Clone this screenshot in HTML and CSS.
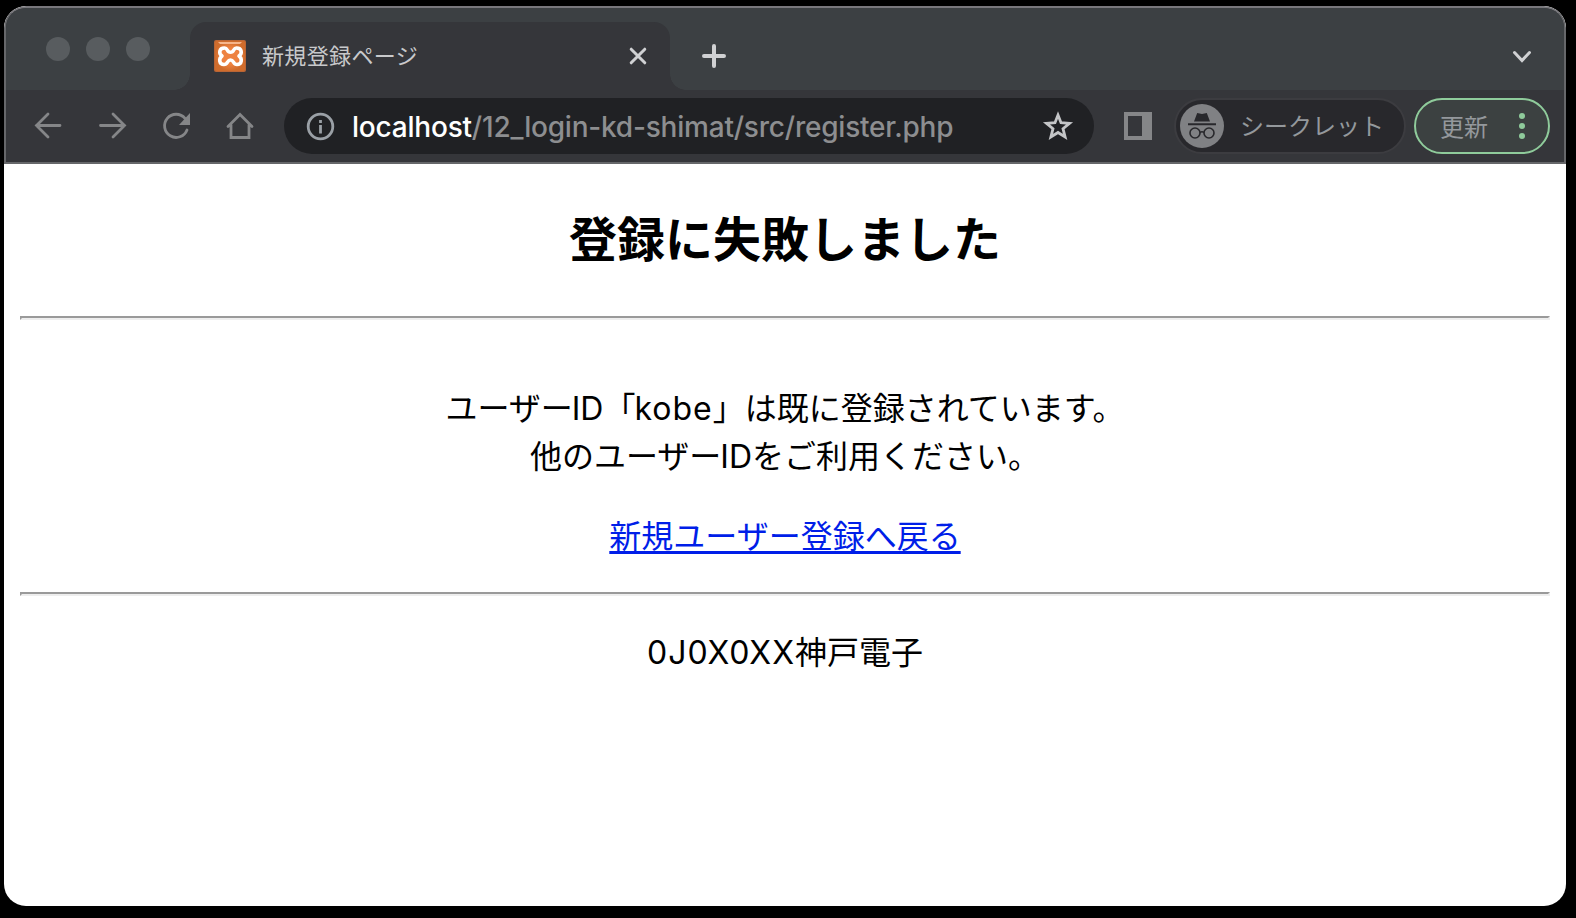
FILE: index.html
```html
<!DOCTYPE html>
<html lang="ja">
<head>
<meta charset="utf-8">
<title>新規登録ページ</title>
<link rel="stylesheet" href="styles.css">
</head>
<body>
<div class="window">
  <header class="chrome">
    <div class="tabstrip">
      <div class="lights"><i></i><i></i><i></i></div>
      <div class="tab">
        <svg class="favicon" viewBox="0 0 32 32">
          <defs><radialGradient id="fav"><stop offset=".55" stop-color="#ee8241"/><stop offset="1" stop-color="#cf6c2c"/></radialGradient></defs>
          <rect width="32" height="32" rx="2" fill="#b96535"/>
          <rect x="1" y="1" width="30" height="30" rx="2" fill="url(#fav)"/>
          <path d="M4 2h24l-2 2H6z" fill="#f6b58b"/>
          <path d="M10.500 8C5 8 4.500 13.500 8 16 4.500 18.500 5 24.500 10 24.500c4 0 3-4.500 6.500-4.500s2.500 4.500 6.500 4.500c5 0 5.500-6 2-8.500 3.500-2.500 3-8-2.500-8-3.500 0-2 4.300-6 4.300S14 8 10.500 8z" fill="none" stroke="#fff" stroke-width="3.600" stroke-linejoin="round"/>
        </svg>
        <span class="tab-title">新規登録ページ</span>
        <svg class="close" viewBox="0 0 16 16"><path d="M1.200 1.200 14.800 14.800M14.800 1.200 1.200 14.800"/></svg>
      </div>
      <svg class="plus" viewBox="0 0 24 24"><path d="M12 2v20M2 12h20"/></svg>
      <svg class="chevron" viewBox="0 0 18 12"><path d="m1.500 1.500 7.500 8 7.500-8"/></svg>
    </div>
    <div class="toolbar">
      <nav class="nav">
        <svg viewBox="0 0 28 28"><path d="M14 2 2.500 13.500 14 25M2.500 13.500H26"/></svg>
        <svg viewBox="0 0 28 28"><path d="M15 2l11.500 11.500L15 25M26.500 13.500H2.500"/></svg>
        <svg viewBox="0 0 28 28"><path d="M23 6.300A11.600 11.600 0 1 0 25 18"/><path class="solid" d="M28 1v12H17z"/></svg>
        <svg viewBox="0 0 28 28"><path d="M2 14.500 14 2.500l12 12M5 13v12.500h18V13"/></svg>
      </nav>
      <div class="omnibox">
        <svg class="info" viewBox="0 0 28 28"><circle cx="14.500" cy="14.500" r="12.300"/><path d="M14.500 13v8.500M14.500 8v3"/></svg>
        <span class="url"><span class="host">localhost</span><span class="path">/12_login-kd-shimat/src/register.php</span></span>
        <svg class="star" viewBox="0 0 30 30"><path d="m15 4 3 7.700 8.500.6-6.500 5.400 2.100 8.300-7.100-4.500L7.900 26 10 17.700l-6.500-5.400 8.500-.6z"/></svg>
      </div>
      <svg class="panel" viewBox="0 0 28 28"><path fill-rule="evenodd" d="M0 0h28v28H0zM4 4v20h14V4z"/></svg>
      <div class="incognito">
        <svg viewBox="0 0 44 44"><circle cx="22" cy="22" r="22" fill="#808184"/><path d="m14 17.500 3.200-8.500 4.800 1 4.800-1 3.200 8.500z" fill="#28282c"/><path d="M8 20.300h28" stroke="#28282c" stroke-width="2"/><g fill="none" stroke="#28282c" stroke-width="1.600"><circle cx="15" cy="29" r="5"/><circle cx="29" cy="29" r="5"/><path d="M20 28.500q2-1.500 4 0"/></g></svg>
        <span>シークレット</span>
      </div>
      <div class="update"><span>更新</span><div class="dots"><i></i><i></i><i></i></div></div>
    </div>
  </header>
  <main class="page">
    <h1>登録に失敗しました</h1>
    <hr>
    <p class="message">ユーザー<span class="latin id">ID</span>「<span class="latin kobe">kobe</span>」は既に登録されています。<br>他のユーザー<span class="latin id">ID</span>をご利用ください。</p>
    <p class="back"><a href="#">新規ユーザー登録へ戻る</a></p>
    <hr>
    <p class="author"><span class="latin code">0J0X0XX</span>神戸電子</p>
  </main>
</div>
</body>
</html>
```
FILE: styles.css
```css
* { box-sizing: border-box; }
body { margin: 0; background: #000; font-family: "Noto Sans CJK JP", sans-serif; }
svg { display: block; flex: none; overflow: visible; }
.window { width: 1562px; height: 900px; margin: 6px 0 0 4px; border-radius: 22px; background: #fff; overflow: hidden; }
.chrome { height: 158px; border: 2px solid #66676a; border-top-color: #78777c; border-radius: 22px 22px 0 0; background: #35363a; overflow: hidden; }
.tabstrip { display: flex; height: 82px; background: #3c4043; }
.lights { display: flex; gap: 16px; width: 184px; padding: 29px 0 0 40px; }
.lights i { width: 24px; height: 24px; border-radius: 50%; background: #585c5f; }
.tab { position: relative; display: flex; align-items: center; width: 480px; height: 68px; margin-top: 14px; padding: 0 24px; border-radius: 16px 16px 0 0; background: #35363a; }
.tab::before, .tab::after { content: ""; position: absolute; bottom: 0; width: 16px; height: 16px; }
.tab::before { left: -16px; background: radial-gradient(circle at 0 0, transparent 15.500px, #35363a 16px); }
.tab::after { right: -16px; background: radial-gradient(circle at 100% 0, transparent 15.500px, #35363a 16px); }
.favicon { width: 32px; height: 32px; }
.tab-title { margin-left: 16px; padding-bottom: 4px; color: #c8c9cb; font-size: 22px; line-height: 32px; letter-spacing: .35px; }
.close { width: 16px; height: 16px; margin-left: auto; }
.close path, .plus path, .chevron path { fill: none; stroke: #d0d1d3; stroke-width: 3; stroke-linecap: round; }
.plus { width: 24px; height: 24px; margin: 36px 0 0 32px; }
.plus path { stroke-width: 4; }
.chevron { width: 18px; height: 12px; margin: 43px 33px 0 auto; }
.toolbar { display: flex; align-items: center; height: 72px; padding-left: 28px; }
.nav { display: flex; gap: 36px; }
.nav svg { width: 28px; height: 28px; }
.nav path { fill: none; stroke: #858688; stroke-width: 2.800; stroke-linecap: round; }
.nav .solid { fill: #858688; stroke: none; }
.omnibox { display: flex; align-items: center; width: 810px; height: 56px; margin-left: 30px; padding: 0 21px 0 22px; border-radius: 28px; background: #202124; }
.info { width: 28px; height: 28px; }
.info circle, .info path { fill: none; stroke: #9aa0a6; stroke-width: 2.800; }
.url { margin-left: 18px; padding-top: 2px; font: 450 28px/40px Inter, sans-serif; letter-spacing: -.21px; white-space: nowrap; }
.host { color: #fff; }
.path { color: #8d8e90; }
.star { width: 30px; height: 30px; margin-left: auto; }
.star path { fill: none; stroke: #c4c5c7; stroke-width: 2.800; }
.panel { width: 28px; height: 28px; margin-left: 30px; fill: #858688; }
.incognito { display: flex; align-items: center; width: 232px; height: 56px; margin-left: 22px; padding-left: 4px; border: 2px solid #3c3c40; border-radius: 28px; background: #28282c; color: #94989c; font-size: 24px; line-height: 36px; }
.incognito svg { width: 44px; height: 44px; }
.incognito span { margin-left: 16px; padding-bottom: 2px; }
.update { display: flex; align-items: center; justify-content: space-between; width: 136px; height: 56px; margin-left: 8px; padding: 0 23px 0 24px; border: 2px solid #8fcb9b; border-radius: 28px; background: #3c4141; color: #94989c; font-size: 24px; line-height: 36px; }
.dots { display: flex; flex-direction: column; gap: 4px; }
.dots i { width: 6px; height: 6px; border-radius: 50%; background: #8fcb9b; }
.page { padding: 0 16px; color: #000; font-size: 32px; line-height: 48px; text-align: center; }
h1 { margin: 0; padding-top: 36px; height: 152px; font-size: 48px; line-height: 72px; }
hr { height: 4px; margin: 0; border: 2px solid; border-color: #9a9a9a #eee #eee #9a9a9a; }
.message { margin: 62px 0 0; }
.back { margin: 32px 0 34px; }
.back a { color: #001ee8; text-underline-offset: 3px; text-decoration-thickness: 3px; }
.author { margin: 30px 0 0; }
.latin { font-family: Inter, sans-serif; line-height: 1; }
.id { margin-left: -1px; }
.kobe { margin-left: -1px; letter-spacing: 1px; }
.code { letter-spacing: 1px; }
```
